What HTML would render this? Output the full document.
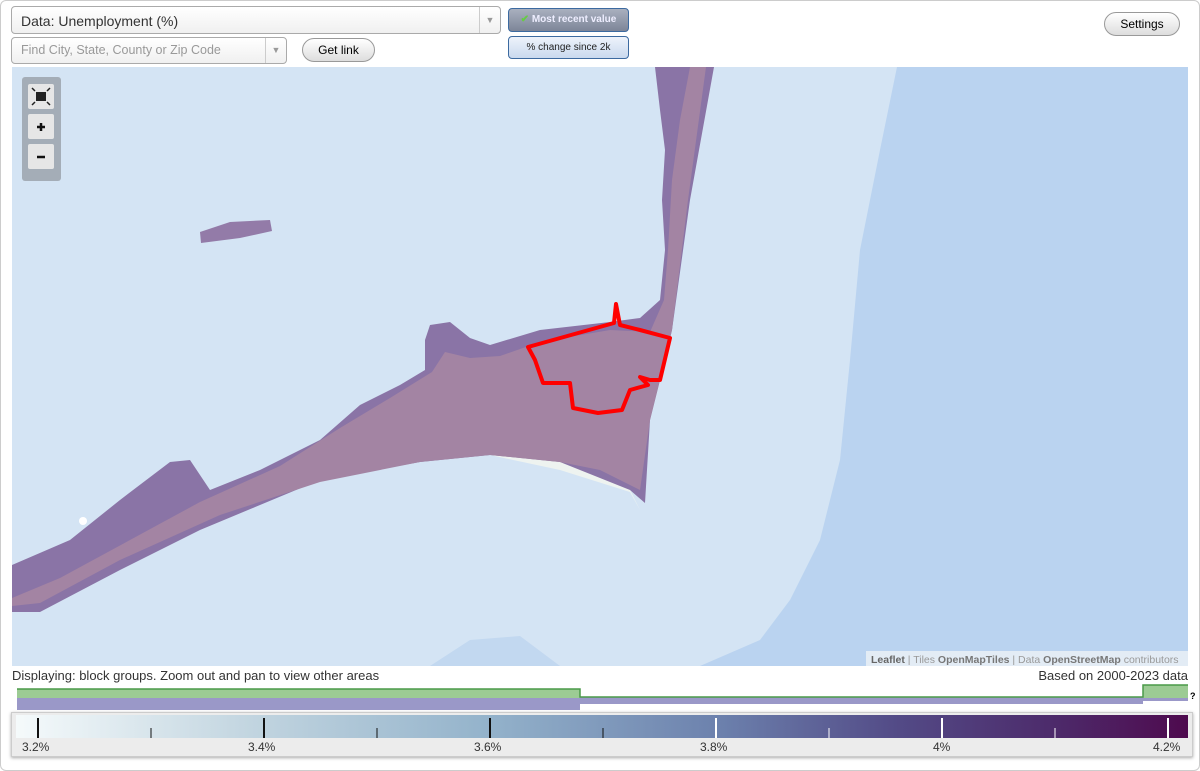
<!DOCTYPE html>
<html><head><style>
body{margin:0;width:1200px;height:771px;background:#fff;font-family:"Liberation Sans",sans-serif;position:relative;overflow:hidden}
.frame{position:absolute;left:0;top:0;width:1198px;height:769px;border:1px solid #ccc;border-radius:6px}
.sel{position:absolute;background:linear-gradient(#fff,#f0f0f0);border:1px solid #aaa;border-radius:4px;box-sizing:border-box}
.btn{position:absolute;border:1px solid #999;border-radius:12px;background:linear-gradient(#fff,#ddd);font-size:12px;text-align:center;box-sizing:border-box}
.tg{position:absolute;border:1px solid #3c6aa0;border-radius:4px;font-size:10px;text-align:center;box-sizing:border-box}
.lbl{position:absolute;top:740px;font-size:12px;color:#333}
</style></head><body>
<div class="frame"></div>
<div class="sel" style="left:11px;top:6px;width:490px;height:28px;font-size:14px;color:#333;padding:6px 9px">Data: Unemployment (%)<span style="position:absolute;right:0;top:0;width:20px;height:26px;border-left:1px solid #ccc;color:#999;font-size:9px;line-height:26px;text-align:center">▼</span></div>
<div class="sel" style="left:11px;top:37px;width:276px;height:27px;font-size:12.5px;color:#999;padding:5px 9px">Find City, State, County or Zip Code<span style="position:absolute;right:0;top:0;width:20px;height:25px;border-left:1px solid #ccc;color:#999;font-size:9px;line-height:25px;text-align:center">▼</span></div>
<div class="btn" style="left:302px;top:38px;width:73px;height:24px;line-height:22px">Get link</div>
<div class="tg" style="left:508px;top:8px;width:121px;height:24px;line-height:22px;background:linear-gradient(#a9b0bf,#7d8598);color:#eef;font-weight:bold"><span style="color:#6c4">✔</span> Most recent value</div>
<div class="tg" style="left:508px;top:36px;width:121px;height:23px;line-height:21px;background:linear-gradient(#eef3fb,#c9d9ee);color:#222">% change since 2k</div>
<div class="btn" style="left:1104px;top:12px;width:76px;height:24px;line-height:22px">Settings</div>
<svg style="position:absolute;left:12px;top:67px" width="1176" height="599" viewBox="12 67 1176 599">
<rect x="12" y="67" width="1176" height="599" fill="#d4e4f4"/>
<polygon points="897,67 1188,67 1188,666 700,666 760,640 790,600 820,540 840,460 850,360 860,250 880,150" fill="#bad3f0"/>
<polygon points="430,666 470,640 520,636 560,666" fill="#c2d8f0"/>
<polygon points="200,232 230,222 270,220 272,231 240,238 201,243" fill="#937ba8"/>
<polygon points="640,510 620,470 560,458 490,455 560,470 630,492" fill="#eef3f0"/>
<polygon points="655,67 714,67 690,200 672,330 660,380 650,420 645,503 630,490 560,462 490,455 420,462 320,480 200,530 120,570 40,612 12,612 12,565 70,540 120,500 170,462 190,460 210,490 260,470 320,440 360,405 400,385 425,370 425,340 430,325 450,322 470,338 490,345 540,330 610,322 640,318 660,300 665,250 662,200 665,150 660,110" fill="#8a74a6"/>
<polygon points="12,598 60,578 130,540 200,502 280,466 340,428 390,398 432,372 445,352 470,358 500,356 540,342 610,330 650,332 664,300 668,250 672,180 680,120 690,67 706,67 688,200 672,330 660,380 650,420 640,490 600,470 560,462 490,455 420,462 320,482 220,515 120,560 40,603 12,606" fill="#a384a3"/>
<polygon points="528,347 614,323 616,304 620,325 640,330 670,338 660,380 650,380 640,377 648,385 630,390 622,410 598,413 573,408 570,383 543,383 535,360" fill="none" stroke="#f00" stroke-width="4" stroke-linejoin="round"/>
<circle cx="83" cy="521" r="4" fill="#fff"/>
<rect x="22" y="77" width="39" height="104" rx="3" fill="#a4adb7"/>
<rect x="28" y="84" width="26" height="25" rx="2" fill="#e6e6e6"/>
<rect x="36" y="92" width="10" height="9" fill="#222"/>
<path d="M32 88l3 3M50 88l-3 3M32 105l3-3M50 105l-3-3" stroke="#222" stroke-width="1.5"/>
<rect x="28" y="114" width="26" height="25" rx="2" fill="#e6e6e6"/>
<path d="M37 127h8M41 123v8" stroke="#111" stroke-width="2.5"/>
<rect x="28" y="144" width="26" height="25" rx="2" fill="#e6e6e6"/>
<path d="M37 157h8" stroke="#111" stroke-width="2.5"/>
<rect x="866" y="651" width="322" height="15" fill="#e8eef5" opacity=".9"/>
<text x="871" y="663" font-size="10.5" fill="#999" font-family="Liberation Sans"><tspan fill="#666" font-weight="bold">Leaflet</tspan> | Tiles <tspan fill="#777" font-weight="bold">OpenMapTiles</tspan> | Data <tspan fill="#777" font-weight="bold">OpenStreetMap</tspan> contributors</text>
</svg>
<div style="position:absolute;left:12px;top:668px;font-size:13px;color:#333">Displaying: block groups. Zoom out and pan to view other areas</div>
<div style="position:absolute;right:12px;top:668px;font-size:13px;color:#333">Based on 2000-2023 data</div>
<svg style="position:absolute;left:0;top:680px" width="1200" height="35">
<rect x="17" y="9" width="563" height="9" fill="#9ccb94"/>
<rect x="17" y="18" width="563" height="12" fill="#9a98c8"/>
<rect x="580" y="17" width="563" height="7" fill="#9a98c8"/>
<rect x="1143" y="5" width="45" height="13" fill="#9ccb94"/>
<rect x="1143" y="18" width="45" height="3" fill="#9a98c8"/>
<path d="M17 9H580V17H1143V5H1188" fill="none" stroke="#4a9a48" stroke-width="1.5"/>
<text x="1190" y="19" font-size="9" font-weight="bold">?</text>
</svg>
<div style="position:absolute;left:11px;top:712px;width:1180px;height:43px;background:#ececec;border:1px solid #ccc;box-shadow:0 1px 3px #aaa"></div>
<div style="position:absolute;left:16px;top:715px;width:1172px;height:23px;background:linear-gradient(90deg,#f5fafb,#c2d5e0 20%,#94b3cb 40%,#6c81ad 60%,#534b87 75%,#4d2c6c 88%,#4e0a4e)"></div>
<svg style="position:absolute;left:0;top:715px" width="1200" height="23">
<g stroke="#111" stroke-width="2"><path d="M38 3v20M264 3v20M490 3v20"/></g>
<g stroke="#111" stroke-width="1"><path d="M151 13v10M377 13v10M603 13v10"/></g>
<g stroke="#fff" stroke-width="2"><path d="M716 3v20M942 3v20M1168 3v20"/></g>
<g stroke="#fff" stroke-width="1"><path d="M829 13v10M1055 13v10"/></g>
</svg>
<div class="lbl" style="left:22px">3.2%</div>
<div class="lbl" style="left:248px">3.4%</div>
<div class="lbl" style="left:474px">3.6%</div>
<div class="lbl" style="left:700px">3.8%</div>
<div class="lbl" style="left:933px">4%</div>
<div class="lbl" style="left:1153px">4.2%</div>
</body></html>
